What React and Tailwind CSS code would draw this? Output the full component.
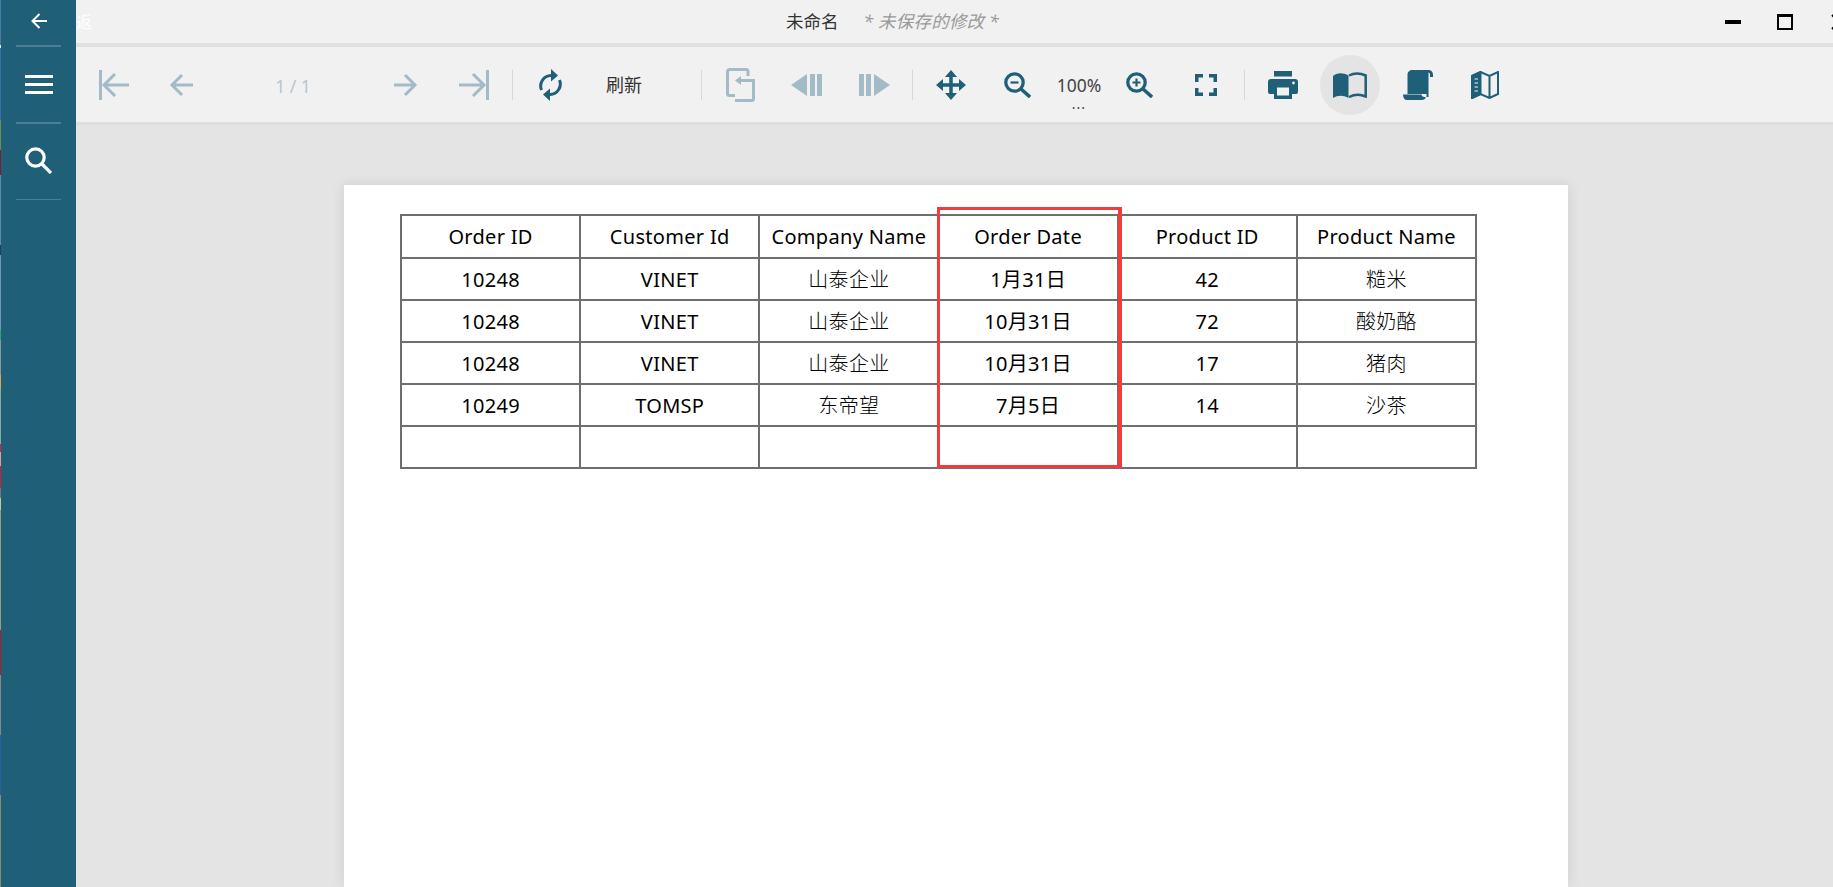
const ACTIVE = "#1f5f78";
const DISABLED = "#a3bbc6";

const columns = ["Order ID", "Customer Id", "Company Name", "Order Date", "Product ID", "Product Name"];
const rows = [
  ["10248", "VINET", "山泰企业", "1月31日", "42", "糙米"],
  ["10248", "VINET", "山泰企业", "10月31日", "72", "酸奶酪"],
  ["10248", "VINET", "山泰企业", "10月31日", "17", "猪肉"],
  ["10249", "TOMSP", "东帝望", "7月5日", "14", "沙茶"],
  ["", "", "", "", "", ""],
];

// sliver of the desktop that shows left of the window
const strip = [
  { h: 45, c: "#4a78a8" }, { h: 3, c: "#e8e8e8" }, { h: 72, c: "#3a6ea5" }, { h: 30, c: "#6b8e4e" },
  { h: 25, c: "#7a2030" }, { h: 70, c: "#5d8aa8" }, { h: 10, c: "#2d3a5c" }, { h: 75, c: "#6f9ab5" },
  { h: 10, c: "#22b060" }, { h: 35, c: "#8a9a9a" }, { h: 14, c: "#d8a84a" }, { h: 55, c: "#8fa8a0" },
  { h: 8, c: "#cc2a35" }, { h: 14, c: "#d9a0a0" }, { h: 22, c: "#c8222e" }, { h: 10, c: "#777777" },
  { h: 12, c: "#c8c890" }, { h: 120, c: "#9a9a80" }, { h: 45, c: "#b02020" }, { h: 60, c: "#888888" },
  { h: 60, c: "#2a5fa8" }, { h: 92, c: "#8a8a70" },
];

function Separator({ className }) {
  return <div className={`h-[30px] w-px shrink-0 bg-[#d6d8d9] ${className}`} />;
}

function Slot({ className, children }) {
  return <div className={`flex h-full shrink-0 items-center justify-center ${className}`}>{children}</div>;
}

function ArrowEnd({ flip }) {
  return (
    <svg width="30" height="30" viewBox="0 0 30 30" fill="none" stroke={DISABLED} strokeWidth="3" className={flip ? "-scale-x-100" : ""}>
      <path d="M1.5 0v30M30 15H5M16 4 5 15l11 11" />
    </svg>
  );
}

function Arrow({ flip }) {
  return (
    <svg width="24" height="24" viewBox="0 0 24 24" fill="none" stroke={DISABLED} strokeWidth="3" className={flip ? "-scale-x-100" : ""}>
      <path d="M24 12H3M13 2 3 12l10 10" />
    </svg>
  );
}

function Refresh() {
  return (
    <svg width="25" height="32" viewBox="0 0 25 32" fill="none" stroke={ACTIVE} strokeWidth="3">
      <path d="M3.5 21A10.5 10.5 0 0 1 13 6.5M21.5 11A10.5 10.5 0 0 1 12 25.5" />
      <path d="M13 0l7 6.5-7 6zM12 19.5l-7 6 7 6.5z" fill={ACTIVE} stroke="none" />
    </svg>
  );
}

function ExportIcon() {
  return (
    <svg width="29" height="34" viewBox="0 0 29 34" fill="none" stroke={DISABLED} strokeWidth="3">
      <path d="M22 8V3.5a2 2 0 0 0-2-2H3.500a2 2 0 0 0-2 2v22a2 2 0 0 0 2 2H9" />
      <path d="M9 32.500h16.500a2 2 0 0 0 2-2V12.500H14" />
      <path d="M15 8l-6 4.500 6 4.500z" fill={DISABLED} stroke="none" />
    </svg>
  );
}

function Section({ flip }) {
  return (
    <svg width="31" height="22" viewBox="0 0 31 22" fill={DISABLED} className={flip ? "-scale-x-100" : ""}>
      <path d="M16 0v22L0 11z" />
      <rect x="19" width="5" height="22" />
      <rect x="26" width="5" height="22" />
    </svg>
  );
}

function Move() {
  return (
    <svg width="30" height="30" viewBox="0 0 30 30" fill={ACTIVE} stroke="none">
      <path d="M15 5v20M5 15h20" stroke={ACTIVE} strokeWidth="3.500" />
      <path d="M15 0l6 7H9zM15 30l-6-7h12zM0 15l7-6v12zM30 15l-7 6V9z" />
    </svg>
  );
}

function Zoom({ plus }) {
  return (
    <svg width="27" height="26" viewBox="0 0 27 26" fill="none" stroke={ACTIVE}>
      <circle cx="10.500" cy="10.500" r="8.700" strokeWidth="3.300" />
      <path d="M16.500 16.500 26 25" strokeWidth="3.500" />
      <path d={plus ? "M6.500 10.500h8M10.500 6.500v8" : "M6.500 10.500h8"} strokeWidth="2.200" />
    </svg>
  );
}

function FullScreen() {
  return (
    <svg width="22" height="22" viewBox="0 0 22 22" fill="none" stroke={ACTIVE} strokeWidth="3.500">
      <path d="M1.750 8V1.750H8M14 1.750h6.250V8M20.250 14v6.250H14M8 20.250H1.750V14" />
    </svg>
  );
}

function Printer() {
  return (
    <svg width="30" height="28" viewBox="0 0 30 28" fill={ACTIVE}>
      <rect x="6" width="18" height="5.500" />
      <path d="M3 8h24a3 3 0 0 1 3 3v10a2 2 0 0 1-2 2h-4v5H6v-5H2a2 2 0 0 1-2-2V11a3 3 0 0 1 3-3z" />
      <rect x="9" y="16.500" width="12" height="8" fill="#f1f1f1" />
      <circle cx="25.500" cy="12" r="1.400" fill="#f1f1f1" />
    </svg>
  );
}

function Book() {
  return (
    <svg width="34" height="26" viewBox="0 0 34 26" fill="none">
      <path d="M0 4C4 .5 10 .5 15.500 3.500V26C10 23 5 23 0 26z" fill={ACTIVE} />
      <path d="M16 3.500C21 .8 27 .8 32.700 3.500V24.500C27 22 21 22.500 16 25" stroke={ACTIVE} strokeWidth="2.500" />
    </svg>
  );
}

function Scroll() {
  return (
    <svg width="30" height="30" viewBox="0 0 30 30" fill={ACTIVE}>
      <path d="M4.500 23V5c0-3 2-5 5-5H25.500c2.600 0 4.500 2 4.500 4.500V7h-3V4.500c0-1-.6-1.800-1.500-2V27H23.500v-3H4.500z" />
      <path d="M0 24.500h18.500c.2 1.700 1.700 2.800 4.500 2.800-.8 1.800-2.200 2.700-4 2.700H4c-2.500 0-4-2-4-5.500z" />
    </svg>
  );
}

function MapIcon() {
  return (
    <svg width="28" height="28" viewBox="0 0 28 28" fill="none" stroke={ACTIVE} strokeWidth="2">
      <path d="M1 5 9.500 1l9 4L27 1v22l-8.500 4-9-4L1 27zM18.500 5v22" />
      <path d="M1 5 9.500 1v22L1 27z" fill={ACTIVE} />
      <path d="M3.500 8h3.500M3.500 12h3.500M3.500 16h3.500M3.500 20h3.500" stroke="#a9c3cf" strokeWidth="1.500" />
    </svg>
  );
}

function Sidebar() {
  return (
    <aside className="flex h-full w-[76px] shrink-0">
      <div className="flex w-px shrink-0 flex-col">
        {strip.map((s, i) => (
          <div key={i} style={{ height: s.h, background: s.c }} />
        ))}
      </div>
      <div className="flex flex-1 flex-col bg-[#1f5f78]">
        <div className="flex h-[45px] items-center justify-center pb-[4px]">
          <svg width="16" height="16" viewBox="0 0 16 16" fill="none" stroke="white" strokeWidth="2">
            <path d="M16 8H2M8.500 1 1.500 8l7 7" />
          </svg>
        </div>
        <div className="ml-[15px] h-0.5 w-[45px] bg-[#4d7f94]" />
        <div className="flex h-[75px] items-center justify-center">
          <div className="flex w-7 flex-col gap-[5px]">
            <div className="h-[3px] bg-white" />
            <div className="h-[3px] bg-white" />
            <div className="h-[3px] bg-white" />
          </div>
        </div>
        <div className="ml-[15px] h-0.5 w-[45px] bg-[#4d7f94]" />
        <div className="flex h-[75px] items-center justify-center pb-[3px]">
          <svg width="27" height="27" viewBox="0 0 27 27" fill="none" stroke="white" strokeWidth="3.200">
            <circle cx="10.500" cy="10.500" r="8.700" />
            <path d="M16.500 16.500 26 26" />
          </svg>
        </div>
        <div className="ml-[15px] h-px w-[45px] bg-[#4d7f94]" />
      </div>
    </aside>
  );
}

function TitleBar() {
  return (
    <header className="flex h-[47px] shrink-0 items-center overflow-hidden border-b-4 border-[#e0e0e0] bg-[#f1f1f1]">
      <span className="w-[710px] shrink-0 text-[16px] text-white">返</span>
      <span className="shrink-0 text-[17.500px] text-[#333333]">未命名</span>
      <span className="ml-[25px] shrink-0 text-[17.500px] tracking-[0.2px] text-[#999999] italic">* 未保存的修改 *</span>
      <div className="mr-[-14px] ml-auto flex shrink-0 items-center">
        <div className="h-1 w-4 bg-black" />
        <div className="ml-9 h-4 w-4 border-2 border-t-[3px] border-black" />
        <svg width="16" height="16" viewBox="0 0 16 16" stroke="black" strokeWidth="2" className="ml-[38px]">
          <path d="M1 1l14 14M15 1 1 15" />
        </svg>
      </div>
    </header>
  );
}

function Toolbar() {
  return (
    <div className="flex h-[78px] shrink-0 items-center border-b-[3px] border-[#dedede] bg-[#f1f1f1] pl-1">
      <Slot className="w-[68px]"><ArrowEnd /></Slot>
      <Slot className="w-[66px]"><Arrow /></Slot>
      <Slot className="w-[158px] pt-[3px] text-[17.500px] text-[#b4c8d1]">1 / 1</Slot>
      <Slot className="w-[68px]"><Arrow flip /></Slot>
      <Slot className="w-[68px]"><ArrowEnd flip /></Slot>
      <Separator className="ml-1" />
      <Slot className="w-[74px]"><Refresh /></Slot>
      <Slot className="w-[74px] pt-0.5 text-[18px] text-[#333333]">刷新</Slot>
      <Separator className="ml-[40px]" />
      <Slot className="w-[76px]"><ExportIcon /></Slot>
      <Slot className="w-[57px]"><Section /></Slot>
      <Slot className="ml-1 w-[71px]"><Section flip /></Slot>
      <Separator className="ml-0.5" />
      <Slot className="w-[76px]"><Move /></Slot>
      <Slot className="w-[56px]"><Zoom /></Slot>
      <div className="flex h-full w-[68px] shrink-0 flex-col items-center pt-[27px] text-[#444444]">
        <span className="text-[17.500px] leading-[23px]">100%</span>
        <span className="text-[14px] leading-[14px] tracking-[1px]">...</span>
      </div>
      <Slot className="w-[52px]"><Zoom plus /></Slot>
      <Slot className="ml-[3px] w-[76px]"><FullScreen /></Slot>
      <Separator />
      <Slot className="w-[75px]"><Printer /></Slot>
      <div className="flex h-[60px] w-[60px] shrink-0 items-center justify-center rounded-full bg-[#e4e4e4]">
        <Book />
      </div>
      <Slot className="ml-2 w-[60px]"><Scroll /></Slot>
      <Slot className="w-[74px]"><MapIcon /></Slot>
    </div>
  );
}

function ReportTable() {
  return (
    <div className="relative w-[1077px]">
      <table className="w-full table-fixed border-collapse text-center text-[20px] tracking-[0.3px] text-black">
        <thead>
          <tr className="h-[43px]">
            {columns.map((c) => (
              <th key={c} className="border-2 border-[#6e6e6e] p-0 font-normal">{c}</th>
            ))}
          </tr>
        </thead>
        <tbody>
          {rows.map((row, i) => (
            <tr key={i} className="h-[42px]">
              {row.map((v, j) => (
                <td key={j} className={`border-2 border-[#6e6e6e] p-0 pt-0.5 ${j === 2 || j === 5 ? "font-light" : "font-normal"}`}>{v}</td>
              ))}
            </tr>
          ))}
        </tbody>
      </table>
      <div className="absolute top-[-7px] left-[537px] h-[261px] w-[185px] border-[3px] border-r-4 border-[#f23c3c]" />
    </div>
  );
}

export default function App() {
  return (
    <div className="flex h-screen w-full overflow-hidden bg-[#e4e4e4] font-['Noto_Sans','Noto_Sans_CJK_SC',sans-serif]">
      <Sidebar />
      <div className="flex min-w-0 flex-1 flex-col">
        <TitleBar />
        <Toolbar />
        <main className="flex-1 overflow-hidden pt-[60px] pl-[268px]">
          <div className="h-full w-[1224px] bg-white pt-[29px] pl-[56px] shadow-[0_0_12px_rgba(0,0,0,0.1)]">
            <ReportTable />
          </div>
        </main>
      </div>
    </div>
  );
}
